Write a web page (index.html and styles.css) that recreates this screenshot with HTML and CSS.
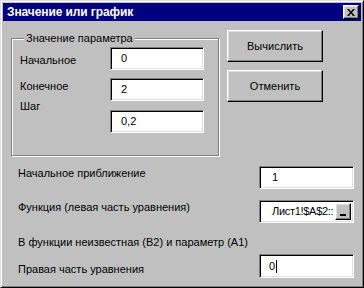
FILE: index.html
```html
<!DOCTYPE html>
<html lang="ru">
<head>
  <meta charset="UTF-8">
  <title>Значение или график</title>
  <link rel="stylesheet" href="styles.css">
</head>
<body>
  <!-- Dialog window -->
  <div class="window">
    <div class="titlebar">
      <span class="title">Значение или график</span>
      <div class="close">
        <svg width="8" height="7" viewBox="0 0 8 7">
          <path d="M0 0h2l2 2.5L6 0h2L5 3.5 8 7H6L4 4.5 2 7H0l3-3.5z" fill="#000"/>
        </svg>
      </div>
    </div>

    <div class="content">
      <div class="top">
        <!-- Parameter group -->
        <div class="group">
          <span class="group-label">Значение параметра</span>
          <div class="labels">
            <span class="lbl l1">Начальное</span>
            <span class="lbl l2">Конечное</span>
            <span class="lbl l3">Шаг</span>
          </div>
          <div class="fields">
            <div class="field">0</div>
            <div class="field">2</div>
            <div class="field">0,2</div>
          </div>
        </div>

        <div class="buttons">
          <div class="btn">Вычислить</div>
          <div class="btn">Отменить</div>
        </div>
      </div>

      <div class="row r1">
        <span class="lbl">Начальное приближение</span>
        <div class="field wide">1</div>
      </div>
      <div class="row r2">
        <span class="lbl">Функция (левая часть уравнения)</span>
        <div class="field wide ref">
          <span class="ref-text">Лист1!$A$2::</span>
          <div class="ref-btn"><span class="bar"></span></div>
        </div>
      </div>
      <div class="row r3">
        <span class="lbl">В функции неизвестная (B2) и параметр (A1)</span>
      </div>
      <div class="row r4">
        <span class="lbl">Правая часть уравнения</span>
        <div class="field wide right">0<span class="caret"></span></div>
      </div>
    </div>
  </div>
</body>
</html>
```

FILE: styles.css
```css
/* Basic page */
html, body {
  margin: 0;
  padding: 0;
  background: #c0c0c0;
}
body {
  font-family: "Liberation Sans", Arial, sans-serif;
  font-size: 11px;
  line-height: 13px;
  color: #000;
}

/* Window frame */
.window {
  width: 364px;
  height: 288px;
  box-sizing: border-box;
  padding: 2px;
  background: #c0c0c0;
  border-top: 1px solid #dfdfdf;
  border-left: 1px solid #dfdfdf;
  border-right: 1px solid #000;
  border-bottom: 1px solid #000;
  box-shadow: inset 1px 1px #fff, inset -1px -1px #808080;
}
.titlebar {
  height: 18px;
  background: #000080;
  display: flex;
  align-items: center;
  justify-content: space-between;
  padding: 0 2px 0 4px;
}
.title {
  color: #fff;
  font-weight: bold;
  font-size: 12px;
  letter-spacing: -0.1px;
}
.close {
  width: 16px;
  height: 14px;
  box-sizing: border-box;
  background: #c0c0c0;
  border-top: 1px solid #fff;
  border-left: 1px solid #fff;
  border-right: 1px solid #000;
  border-bottom: 1px solid #000;
  box-shadow: inset -1px -1px #808080, inset 1px 1px #dfdfdf;
  display: flex;
  align-items: center;
  justify-content: center;
  padding-right: 1px;
}
.close svg {
  display: block;
}

/* Content */
.content {
  padding-left: 8px;
}
.top {
  display: flex;
  align-items: flex-start;
}

/* Group box */
.group {
  position: relative;
  margin-top: 17px;
  width: 208px;
  height: 118px;
  box-sizing: border-box;
  border: 1px solid #808080;
  box-shadow: inset 1px 1px #fff, 1px 1px #fff;
  display: flex;
  padding-left: 8px;
}
.group-label {
  position: absolute;
  left: 12px;
  top: -7px;
  padding: 0 2px;
  background: #c0c0c0;
}
.labels {
  width: 90px;
  display: flex;
  flex-direction: column;
}
.l1 { margin-top: 15px; }
.l2 { margin-top: 13px; }
.l3 { margin-top: 7px; }
.fields {
  display: flex;
  flex-direction: column;
  gap: 8px;
  padding-top: 8px;
}
.fields .field:last-child {
  margin-top: 1px;
}

/* Sunken edit box */
.field {
  width: 94px;
  height: 23px;
  box-sizing: border-box;
  background: #fff;
  border-top: 1px solid #808080;
  border-left: 1px solid #808080;
  border-right: 1px solid #fff;
  border-bottom: 1px solid #fff;
  box-shadow: inset 1px 1px #000, inset -1px -1px #dfdfdf;
  padding: 0 0 0 10px;
  display: flex;
  align-items: center;
}

/* Buttons */
.buttons {
  display: flex;
  flex-direction: column;
  gap: 8px;
  margin-top: 9px;
  margin-left: 8px;
}
.btn {
  width: 96px;
  height: 32px;
  box-sizing: border-box;
  border-top: 1px solid #fff;
  border-left: 1px solid #fff;
  border-right: 1px solid #000;
  border-bottom: 1px solid #000;
  box-shadow: inset -1px -1px #808080, inset 1px 1px #dfdfdf;
  display: flex;
  align-items: center;
  justify-content: center;
}

/* Lower rows */
.row {
  display: flex;
  align-items: flex-start;
  padding-left: 7px;
}
.row .lbl {
  width: 241px;
  padding-top: 1px;
}
.field.wide {
  width: 95px;
  padding-left: 12px;
}
.r1 { margin-top: 10px; }
.r2 { margin-top: 11px; }
.r3 { margin-top: 12px; }
.r3 .lbl { width: auto; }
.r4 { margin-top: 5px; }
.r4 .lbl { padding-top: 9px; }
.r4 .field { height: 24px; padding-left: 9px; }

/* Reference edit with collapse button */
.field.ref {
  padding: 2px 2px 2px 12px;
  align-items: stretch;
}
.ref-text {
  flex: 1;
  white-space: nowrap;
  letter-spacing: -0.3px;
  display: flex;
  align-items: center;
}
.ref-btn {
  width: 16px;
  flex: none;
  box-sizing: border-box;
  border-top: 1px solid #fff;
  border-left: 1px solid #fff;
  border-right: 1px solid #000;
  border-bottom: 1px solid #000;
  box-shadow: inset -1px -1px #808080, inset 1px 1px #dfdfdf;
  background: #c0c0c0;
  display: flex;
  align-items: flex-end;
  justify-content: center;
  padding-bottom: 3px;
}
.bar {
  width: 6px;
  height: 2px;
  background: #000;
}
.caret {
  width: 1px;
  height: 13px;
  background: #000;
  margin-left: 1px;
}
```
